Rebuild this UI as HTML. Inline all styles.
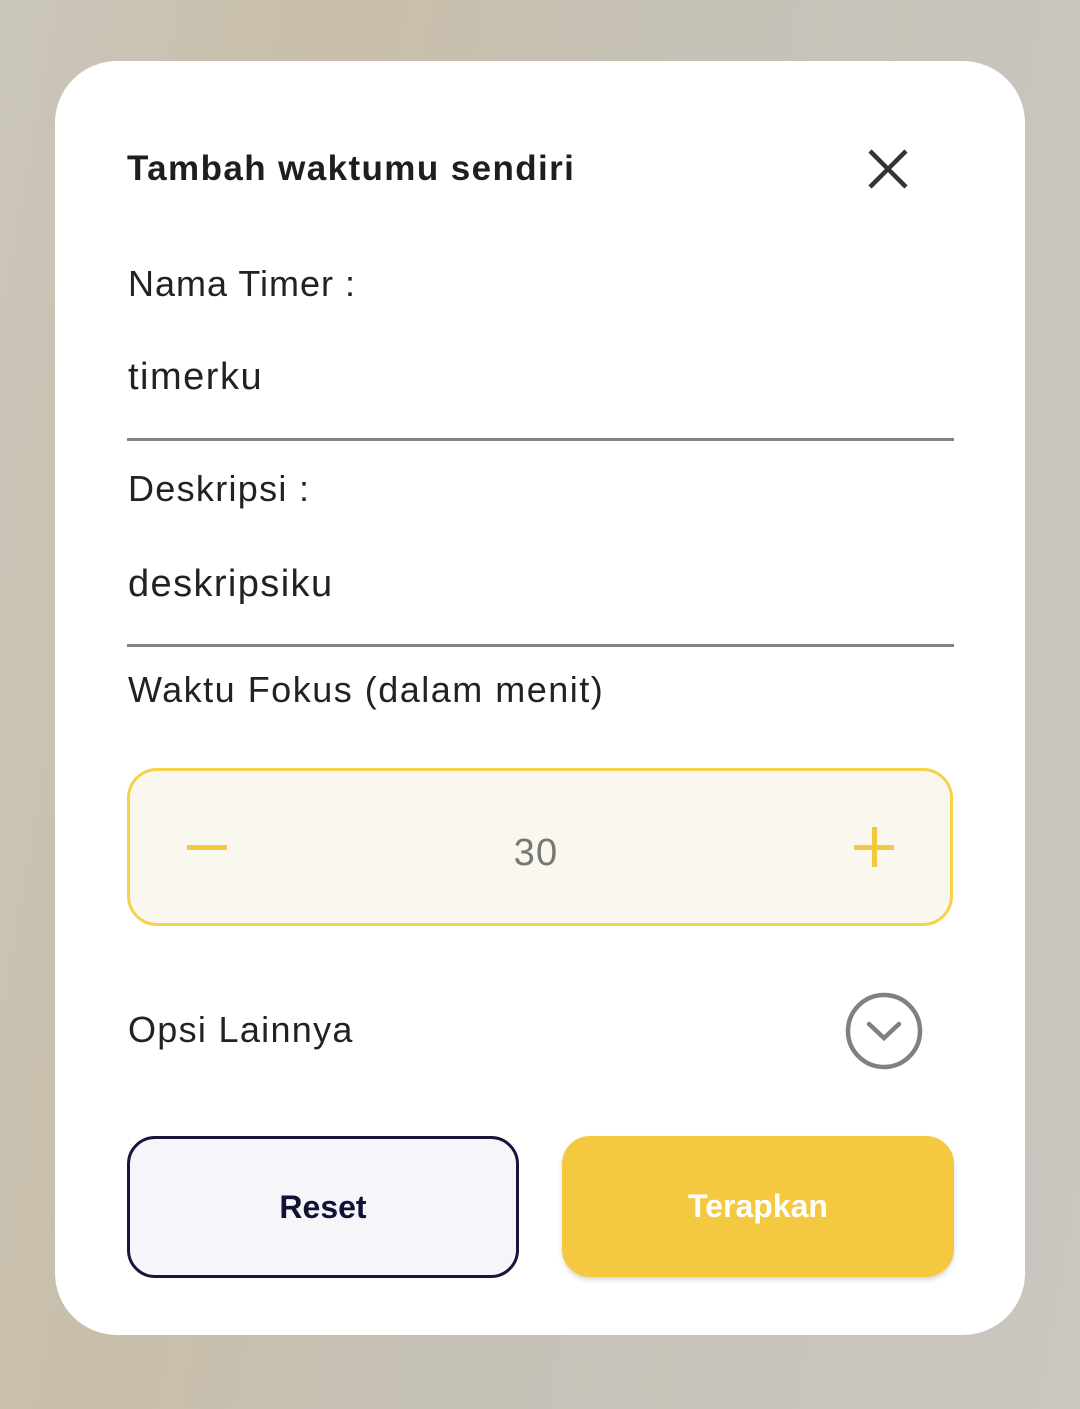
<!DOCTYPE html>
<html><head><meta charset="utf-8"><style>
html,body{margin:0;padding:0;}
body{width:1080px;height:1409px;position:relative;overflow:hidden;font-family:"Liberation Sans",sans-serif;
background:linear-gradient(100deg,#cbc6bb 0%,#c8bea9 25%,#c6c2b8 55%,#cbc7c0 100%);}
.card{position:absolute;left:55px;top:61px;width:970px;height:1274px;background:#fff;border-radius:62px;}
.t{position:absolute;white-space:nowrap;line-height:1;color:#222;letter-spacing:1.3px;}
.line{position:absolute;left:127px;width:827px;height:3px;background:#828286;}
</style></head><body>
<div class="card"></div>
<div class="t" style="left:127px;top:151px;font-size:35px;font-weight:bold;color:#1e1e1e;letter-spacing:1.4px;">Tambah waktumu sendiri</div>
<svg style="position:absolute;left:866px;top:147px" width="44" height="44" viewBox="0 0 44 44"><path d="M4 4L40 40M40 4L4 40" stroke="#333" stroke-width="4.5" fill="none"/></svg>
<div class="t" style="left:128px;top:266px;font-size:36px;letter-spacing:1px;">Nama Timer :</div>
<div class="t" style="left:128px;top:358px;font-size:38px;letter-spacing:1.5px;">timerku</div>
<div class="line" style="top:438px"></div>
<div class="t" style="left:128px;top:471px;font-size:36px;">Deskripsi :</div>
<div class="t" style="left:128px;top:565px;font-size:38px;letter-spacing:1.4px;">deskripsiku</div>
<div class="line" style="top:644px"></div>
<div class="t" style="left:128px;top:672px;font-size:36px;letter-spacing:1.5px;">Waktu Fokus (dalam menit)</div>
<div style="position:absolute;left:127px;top:768px;width:820px;height:152px;border:3px solid #f6d24a;border-radius:30px;background:#f9f7ee;"></div>
<div style="position:absolute;left:187px;top:845px;width:40px;height:5px;background:#f5c93f;"></div>
<div style="position:absolute;left:854px;top:845px;width:40px;height:5px;background:#f5c93f;"></div>
<div class="t" style="left:872px;top:827px;width:5px;height:40px;background:#f5c93f;"></div>
<div class="t" style="left:436px;width:200px;text-align:center;top:834px;font-size:38px;color:#777;">30</div>
<div class="t" style="left:128px;top:1012px;font-size:36px;">Opsi Lainnya</div>
<svg style="position:absolute;left:844px;top:991px" width="80" height="80" viewBox="0 0 80 80"><circle cx="40" cy="40" r="36" stroke="#808080" stroke-width="4.5" fill="none"/><path d="M25 33L40 47L55 33" stroke="#808080" stroke-width="4.5" fill="none" stroke-linecap="round"/></svg>
<div style="position:absolute;left:127px;top:1136px;width:386px;height:136px;border:3px solid #15163a;border-radius:28px;background:#f5f5fa;display:flex;align-items:center;justify-content:center;font-size:32px;font-weight:bold;color:#111133;">Reset</div>
<div style="position:absolute;left:562px;top:1136px;width:392px;height:141px;border-radius:28px;background:#f5c842;box-shadow:0 3px 5px rgba(0,0,0,0.15);display:flex;align-items:center;justify-content:center;font-size:32px;font-weight:bold;color:#fff;">Terapkan</div>
</body></html>
